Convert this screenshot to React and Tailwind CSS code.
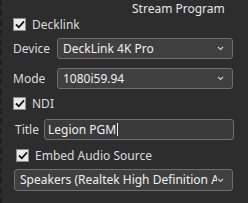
import React from "react"

const font = { fontFamily: '"Noto Sans", "Open Sans", sans-serif' }

function Check() {
  return (
    <div className="w-[13px] h-[13px] shrink-0 bg-[#e9e9e9] border border-[#8a8a8a] flex items-center justify-center">
      <svg width="10" height="9" viewBox="0 0 10 9">
        <path d="M1 4.5 L3.8 7.3 L9 1.3" fill="none" stroke="#111" strokeWidth="1.8" />
      </svg>
    </div>
  )
}

function Chevron() {
  return (
    <svg width="7" height="5" viewBox="0 0 7 5" className="shrink-0">
      <path d="M1 1 L3.5 3.5 L6 1" fill="none" stroke="#cfcfcf" strokeWidth="1.1" />
    </svg>
  )
}

function Select({ value, className = "" }) {
  return (
    <div className={`flex items-center h-full bg-[#3f3f3f] border border-[#6e6e6e] rounded-[3px] pl-[5px] pr-[8px] ${className}`}>
      <div className="flex-1 overflow-hidden whitespace-nowrap text-[#f0f0f0]">{value}</div>
      <Chevron />
    </div>
  )
}

export default function App() {
  return (
    <div style={font} className="w-[248px] h-[203px] bg-[#2d2d2d] border-l-2 border-dashed border-[#1f1f1f] text-[12px] text-[#dcdcdc] overflow-hidden">
      <div className="h-[18px] pl-[130px] leading-[18px] text-[#e6e6e6]">Stream Program</div>
      <div className="h-[13px] flex items-center pl-[11px] gap-[6px]">
        <Check />
        <span className="leading-none">Decklink</span>
      </div>
      <div className="mt-[7px] h-[21px] flex items-center">
        <span className="w-[55px] pl-[11px] shrink-0">Device</span>
        <Select value="DeckLink 4K Pro" className="w-[176px]" />
      </div>
      <div className="mt-[9px] h-[21px] flex items-center">
        <span className="w-[55px] pl-[11px] shrink-0">Mode</span>
        <Select value="1080i59.94" className="w-[176px]" />
      </div>
      <div className="mt-[8px] h-[13px] flex items-center pl-[11px] gap-[6px]">
        <Check />
        <span className="leading-none">NDI</span>
      </div>
      <div className="mt-[9px] h-[21px] flex items-center">
        <span className="w-[42px] pl-[13px] shrink-0">Title</span>
        <div className="w-[190px] h-full flex items-center bg-[#3a3a3a] border border-[#6e6e6e] rounded-[3px] pl-[3px] text-[#f0f0f0]">
          Legion PGM<span className="w-px h-[13px] bg-[#f0f0f0] ml-[1px]" />
        </div>
      </div>
      <div className="mt-[9px] h-[13px] flex items-center pl-[14px] gap-[6px]">
        <Check />
        <span className="leading-none">Embed Audio Source</span>
      </div>
      <div className="mt-[7px] h-[22px] pl-[12px]">
        <Select value="Speakers (Realtek High Definition Audio)" className="w-[219px]" />
      </div>
    </div>
  )
}
